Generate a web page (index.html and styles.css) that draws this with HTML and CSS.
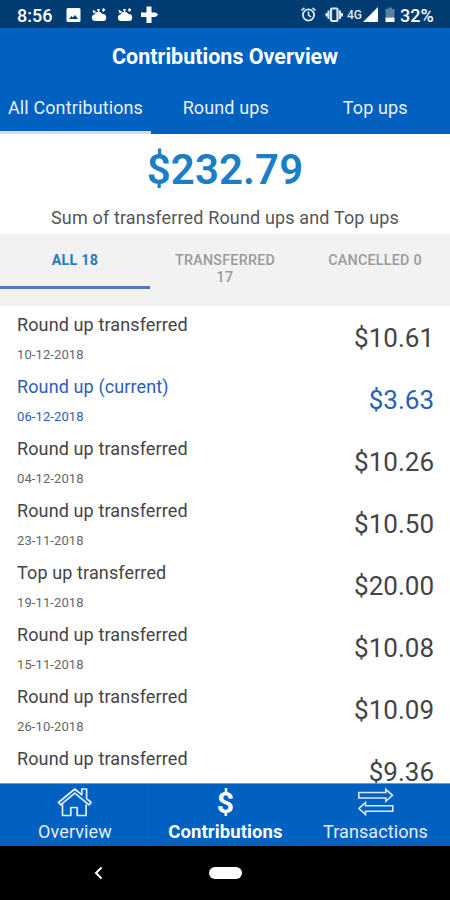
FILE: index.html
```html
<!DOCTYPE html>
<html lang="en">
<head>
<meta charset="utf-8">
<title>Contributions Overview</title>
<link rel="stylesheet" href="styles.css">
</head>
<body>
<div class="screen">
  <div class="status">
    <span class="clock">8:56</span>
    <svg class="status-left" width="94" height="20" viewBox="66 5 94 20" fill="#fff">
      <path fill-rule="evenodd" d="M68 8h11q1.500 0 1.500 1.500v11q0 1.500-1.500 1.500h-11q-1.500 0-1.500-1.500v-11q0-1.500 1.500-1.500zM69 19h9l-3-4-2.200 2.600-1.300-1.600z"/>
      <g id="cloud"><path d="M95 21a3.300 3.300 0 0 1-.6-6.500 4.500 4.500 0 0 1 8-.5 3.500 3.500 0 0 1 .6 7z"/><path d="M92.500 9.500l4 2.500-3 1.500zM97 9h3l-1 3h-1zM103 8l2.500 1.500-2 2.500-1.500-1.500z"/></g>
      <use href="#cloud" x="26"/>
      <path d="M146.500 6.500h5v6h4l2.700 2-2.700 2.500h-4v6h-5v-6H141v-4.500h5.500z"/>
    </svg>
    <span class="spacer"></span>
    <svg class="status-right" width="44" height="20" viewBox="299 5 44 20" fill="none" stroke="#dce8f8">
      <circle cx="306.500" cy="15" r="5.600" stroke-width="1.800"/><path d="M306.500 11.500V15l2.500 2M299.500 10.500l3-2.700M313.500 10.500l-3-2.700" stroke-width="1.600"/>
      <rect x="329" y="8.500" width="6.500" height="12.500" rx="1" stroke-width="2.200"/><path d="M326.500 10.500v8.500M338 10.500v8.500M324.500 13v3.500M340 13v3.500" stroke-width="2"/>
    </svg>
    <span class="network">4G</span>
    <svg class="signal" width="34" height="20" viewBox="363 5 34 20" fill="#fff"><path d="M378 7v15h-15z"/><path d="M388 7.500h4V9h2.500v8.500h-9V9h2.500z" opacity=".35"/><path d="M385.500 17.500h9V22h-9z"/></svg>
    <span class="battery">32%</span>
  </div>
  <header class="header">
    <h1 class="title">Contributions Overview</h1>
    <div class="tabs">
      <div class="tab tab-active"><span>All Contributions</span></div>
      <div class="tab"><span>Round ups</span></div>
      <div class="tab"><span>Top ups</span></div>
    </div>
  </header>
  <section class="summary">
    <div class="total">$232.79</div>
    <div class="caption">Sum of transferred Round ups and Top ups</div>
  </section>
  <div class="filters">
    <div class="filter filter-active">ALL 18</div>
    <div class="filter">TRANSFERRED<br>17</div>
    <div class="filter">CANCELLED 0</div>
  </div>
  <main class="list">
    <div class="row"><div><div class="name">Round up transferred</div><div class="date">10-12-2018</div></div><div class="amount">$10.61</div></div>
    <div class="row current"><div><div class="name">Round up (current)</div><div class="date">06-12-2018</div></div><div class="amount">$3.63</div></div>
    <div class="row"><div><div class="name">Round up transferred</div><div class="date">04-12-2018</div></div><div class="amount">$10.26</div></div>
    <div class="row"><div><div class="name">Round up transferred</div><div class="date">23-11-2018</div></div><div class="amount">$10.50</div></div>
    <div class="row"><div><div class="name">Top up transferred</div><div class="date">19-11-2018</div></div><div class="amount">$20.00</div></div>
    <div class="row"><div><div class="name">Round up transferred</div><div class="date">15-11-2018</div></div><div class="amount">$10.08</div></div>
    <div class="row"><div><div class="name">Round up transferred</div><div class="date">26-10-2018</div></div><div class="amount">$10.09</div></div>
    <div class="row last"><div><div class="name">Round up transferred</div></div><div class="amount">$9.36</div></div>
  </main>
  <nav class="nav">
    <div class="nav-item">
      <svg width="36" height="36" viewBox="0 0 36 36" fill="none" stroke="#e4edff" stroke-width="1.700" stroke-linejoin="round"><path d="M17.800 5L1.500 18.500l2.200 2.300L17.800 9.200l14.100 11.600 2.200-2.300-4.500-3.800V5h-4.800v5.800zM5.500 20.500V31.500h8.300V23.500h6.400v8h8.900V20.500"/></svg>
      <span>Overview</span>
    </div>
    <div class="nav-item nav-active"><span class="dollar">$</span><span>Contributions</span></div>
    <div class="nav-item">
      <svg width="36" height="36" viewBox="0 0 36 36" fill="none" stroke="#dce8ff" stroke-width="1.600"><path d="M.8 8.500h27V5.300l6.700 6-6.700 6v-3.300H.8zM34.800 21.800H7.500V18.500L1 24.500l6.500 6v-3.300h27.300z"/></svg>
      <span>Transactions</span>
    </div>
  </nav>
  <div class="system">
    <svg class="back" width="9" height="14" viewBox="0 0 9 14" fill="none" stroke="#fff" stroke-width="2"><path d="M7.500 1.500L2 7l5.500 5.500"/></svg>
    <div class="home"></div>
  </div>
</div>
</body>
</html>
```
FILE: styles.css
```css
* { box-sizing: border-box; }
body { margin: 0; font-family: Roboto, "Liberation Sans", sans-serif; }
.screen { width: 450px; height: 900px; display: flex; flex-direction: column; overflow: hidden; background: #fff; }
.status { flex: none; height: 28px; padding: 2px 16px 0 17px; background: #003c72; color: #fff; display: flex; align-items: center; }
.status svg { display: block; }
.clock { width: 49px; font-size: 18px; font-weight: 500; }
.spacer { flex: 1; }
.network { width: 16px; margin-left: 2px; font-size: 12px; font-weight: 500; color: #dce8f8; }
.battery { width: 34px; margin-left: 3px; font-size: 18px; font-weight: 500; white-space: nowrap; }
.header { flex: none; height: 106px; background: #0061c1; color: #fff; display: flex; flex-direction: column; justify-content: space-between; }
.title { margin: 15px 0 0; font-size: 21.500px; line-height: 28px; font-weight: 700; text-align: center; }
.tabs { display: grid; grid-template-columns: 151px 1fr 1fr; height: 52px; }
.tab { display: flex; justify-content: center; padding-top: 12px; font-size: 18px; line-height: 28px; letter-spacing: .12px; white-space: nowrap; color: #e8f0ff; }
.tab-active { border-bottom: 3px solid #d7daf1; }
.summary { flex: none; height: 100px; text-align: center; }
.total { padding-top: 12px; font-size: 42px; line-height: 47px; font-weight: 600; letter-spacing: .1px; color: #1a7fc3; }
.caption { margin-top: 13px; font-size: 18px; line-height: 24px; letter-spacing: .15px; color: #555; }
.filters { flex: none; height: 72px; background: #f2f2f2; display: grid; grid-template-columns: repeat(3, 1fr); }
.filter { padding-top: 18px; height: 55px; font-size: 14.300px; line-height: 17px; letter-spacing: .25px; font-weight: 500; text-align: center; color: #9b9b9b; }
.filter-active { border-bottom: 3px solid #4d78c8; color: #267bc3; font-weight: 700; }
.list { flex: none; height: 477px; overflow: hidden; }
.row { height: 62px; padding: 7px 16px 0 17px; display: flex; justify-content: space-between; color: #444; }
.last { height: 43px; }
.name { font-size: 18px; line-height: 24px; letter-spacing: .12px; }
.date { margin-top: 9px; font-size: 13px; line-height: 18px; letter-spacing: .1px; color: #666; }
.amount { padding-top: 10px; font-size: 26px; line-height: 31px; color: #444; font-weight: 400; }
.current, .current .date, .current .amount { color: #2860b8; }
.nav { flex: none; height: 63px; background: #0061c1; border-top: 1px solid #679cda; color: #e4edff; display: grid; grid-template-columns: repeat(3, 1fr); }
.nav-item { display: flex; flex-direction: column; align-items: center; font-size: 18px; line-height: 24px; letter-spacing: .1px; }
.nav-item + .nav-item { border-left: 1px solid #005bb8; }
.nav-item svg, .dollar { flex: none; display: block; height: 36px; }
.nav-active { color: #fff; font-size: 18.500px; font-weight: 700; }
.dollar { font-size: 30px; line-height: 38px; }
.system { flex: none; height: 54px; background: #000; display: flex; align-items: center; }
.back { margin-left: 94px; }
.home { width: 33px; height: 12px; margin-left: 106px; border-radius: 6px; background: #fff; }
```
